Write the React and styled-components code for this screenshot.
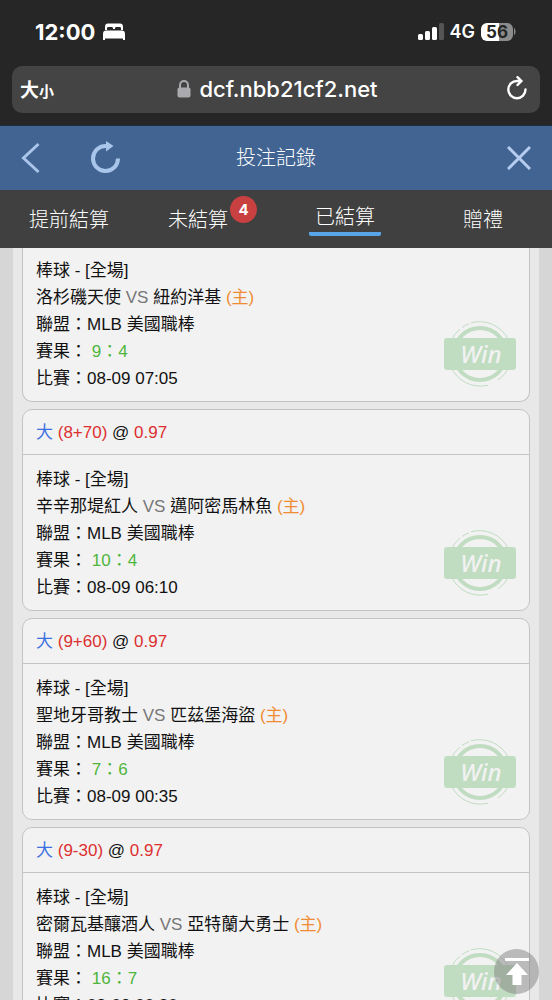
import React from 'react'
import styled, { createGlobalStyle } from 'styled-components';

const bets = [
    { id: 1, away: '洛杉磯天使', home: '紐約洋基', score: '9：4', date: '08-09 07:05' },
    { id: 2, line: '(8+70)', odds: '0.97', away: '辛辛那堤紅人', home: '邁阿密馬林魚', score: '10：4', date: '08-09 06:10' },
    { id: 3, line: '(9+60)', odds: '0.97', away: '聖地牙哥教士', home: '匹茲堡海盜', score: '7：6', date: '08-09 00:35' },
    { id: 4, line: '(9-30)', odds: '0.97', away: '密爾瓦基釀酒人', home: '亞特蘭大勇士', score: '16：7', date: '08-09 00:20' },
];

const tabs = [
    { id: 'early', label: '提前結算' },
    { id: 'open', label: '未結算', count: 4 },
    { id: 'settled', label: '已結算' },
    { id: 'gift', label: '贈禮' },
];

export default function App() {
    //affichage
  return (
    <>
        <GlobalStyle />
        <Screen>
            <StatusBar />
            <AddressBar />
            <TitleBar>
                <TitleActions>
                    <IconButton aria-label="返回">
                        <svg width="20" height="32" viewBox="0 0 20 32" fill="none" stroke="#a9c6ea" strokeWidth="3">
                            <path d="M17.500 2 2.500 16 17.500 30" />
                        </svg>
                    </IconButton>
                    <IconButton aria-label="重新整理">
                        <svg width="30" height="34" viewBox="0 0 30 34" fill="none">
                            <path d="M27 17.500A12.500 12.500 0 1 1 14.500 5H17" stroke="#a9c6ea" strokeWidth="4" />
                            <path d="M15 0 22.500 5 15 10.500Z" fill="#a9c6ea" />
                        </svg>
                    </IconButton>
                </TitleActions>
                <Title>投注記錄</Title>
                <TitleActions $end>
                    <IconButton aria-label="關閉">
                        <svg width="24" height="24" viewBox="0 0 24 24" fill="none" stroke="#b6cdf0" strokeWidth="3">
                            <path d="M1 1 23 23M23 1 1 23" />
                        </svg>
                    </IconButton>
                </TitleActions>
            </TitleBar>
            <TabBar>
                {tabs.map(({ id, label, count }) => (
                    <Tab key={id} $badged={Boolean(count)}>
                        <TabLabel $active={id === 'settled'}>
                            {label}
                            {count && <Badge>{count}</Badge>}
                        </TabLabel>
                    </Tab>
                ))}
            </TabBar>
            <Content>
                <BetList>
                    {bets.map((bet) => <BetCard key={bet.id} {...bet} />)}
                </BetList>
            </Content>
            <TopButton aria-label="回到頂部">
                <svg width="24" height="28" viewBox="0 0 24 28" fill="#fff">
                    <path d="M0 0h24v3H0zM12 5 23 17h-6.500v10h-9V17H1z" />
                </svg>
            </TopButton>
        </Screen>
    </>
  )
}

function StatusBar() {
  return (
    <StatusRow>
        <Clock>
            12:00
            <svg width="24" height="18" viewBox="0 0 24 18" fill="#fff">
                <path d="M3 7V4C3 1.500 4 .5 6 .5h12c2 0 3 1 3 3.500V7h-2V5.500C19 4.500 18.500 4 17.500 4h-3c-1 0-1.500.5-1.500 1.500V6h-2V5.500C11 4.500 10.500 4 9.500 4h-3C5.500 4 5 4.500 5 5.500V7z" />
                <path d="M1 17v-6c0-2.500 1-3.500 3.500-3.500h15c2.500 0 3.500 1 3.500 3.500v6h-2v-1.500H3V17z" />
            </svg>
        </Clock>
        <Signals>
            <svg width="26" height="17" viewBox="0 0 26 17" fill="#fff">
                <rect x="0" y="11" width="5" height="6" rx="1.500" />
                <rect x="7" y="8" width="5" height="9" rx="1.500" />
                <rect x="14" y="4" width="5" height="13" rx="1.500" />
                <rect x="21" y="0" width="5" height="17" rx="1.500" fill="#555" />
            </svg>
            <Network>4G</Network>
            <Battery>
                <Level>56</Level>
                <svg width="2" height="7" viewBox="0 0 2 7" fill="#8c8c8c">
                    <path d="M0 0c2 1 2 6 0 7z" />
                </svg>
            </Battery>
        </Signals>
    </StatusRow>
  )
}

function AddressBar() {
  return (
    <AddressWrap>
        <Address>
            <TextSize aria-label="文字大小">大<small>小</small></TextSize>
            <Domain>
                <svg width="14" height="18" viewBox="0 0 14 18">
                    <path d="M3 9V5a4 4 0 0 1 8 0v4" fill="none" stroke="#aaaaae" strokeWidth="2" />
                    <rect x="0.500" y="7.500" width="13" height="10" rx="2" fill="#aaaaae" />
                </svg>
                dcf.nbb21cf2.net
            </Domain>
            <Reload aria-label="重新載入">
                <svg width="20" height="26" viewBox="0 0 20 26" fill="none" stroke="#fff" strokeWidth="2.400" strokeLinecap="round" strokeLinejoin="round">
                    <path d="M18.500 13.500A8.600 8.600 0 1 1 10 5H14.500M10.500 1.200 14.500 5l-4 4" />
                </svg>
            </Reload>
        </Address>
    </AddressWrap>
  )
}

function BetCard({ line, odds, away, home, score, date }) {
  return (
    <Card $cut={!line}>
        {line && (
            <CardHead>
                <Pick>大</Pick> <Odds>{line}</Odds> @ <Odds>{odds}</Odds>
            </CardHead>
        )}
        <CardBody $cut={!line}>
            <Details>
                <p>棒球 - [全場]</p>
                <p>{away} <Versus>VS</Versus> {home} <HomeMark>(主)</HomeMark></p>
                <p>聯盟：MLB 美國職棒</p>
                <p>賽果： <Score>{score}</Score></p>
                <p>比賽：{date}</p>
            </Details>
            <WinStamp />
        </CardBody>
    </Card>
  )
}

function WinStamp() {
  return (
    <Stamp width="72" height="66" viewBox="0 0 72 66" fill="none">
        <circle cx="36" cy="33" r="26" stroke="#c0dcc1" strokeWidth="4" />
        <path d="M27 1.800A32 32 0 0 1 64 18M18 6.500A32 32 0 0 1 25 2.800M7 20A32 32 0 0 1 16 8" stroke="#c0dcc1" />
        <path d="M7 46A32 32 0 0 0 44 64.200M54 59A32 32 0 0 0 65 46" stroke="#c0dcc1" />
        <rect y="17" width="72" height="32" rx="3" fill="#c0dcc1" />
        <StampText x="37" y="42" textAnchor="middle">Win</StampText>
    </Stamp>
  )
}

const latin = '"Liberation Sans", "Noto Sans CJK TC", sans-serif';
const system = 'Inter, "Noto Sans CJK TC", sans-serif';

const GlobalStyle = createGlobalStyle`
  * {
    box-sizing: border-box;
  }

  body {
    margin: 0;
    background: #d6d6d6;
    font-family: ${latin};
  }

  button {
    padding: 0;
    border: 0;
    background: none;
    color: inherit;
    font: inherit;
    cursor: pointer;
  }

  p, h1 {
    margin: 0;
  }

  svg {
    display: block;
    flex: none;
  }
`;

const Screen = styled.div`
  display: flex;
  flex-direction: column;
  height: 100vh;
  overflow: hidden;
`;

const StatusRow = styled.div`
  display: flex;
  flex: none;
  align-items: center;
  justify-content: space-between;
  height: 66px;
  padding: 0 36px 3px 35px;
  background: #262626;
  color: #fff;
  font-family: ${system};
`;

const Clock = styled.div`
  display: flex;
  align-items: center;
  gap: 7px;
  font-size: 22px;
  font-weight: 700;
`;

const Signals = styled.div`
  display: flex;
  align-items: center;
  gap: 6px;
`;

const Network = styled.span`
  font-size: 18px;
  font-weight: 600;
`;

const Battery = styled.div`
  display: flex;
  align-items: center;
  gap: 1px;
`;

const Level = styled.span`
  width: 32px;
  border-radius: 6px;
  background: linear-gradient(90deg, #fff 56%, #8c8c8c 56%);
  color: #262626;
  font-size: 17px;
  font-weight: 700;
  line-height: 18px;
  text-align: center;
`;

const AddressWrap = styled.div`
  flex: none;
  padding: 0 12px 12px;
  border-bottom: 1px solid #1f2c40;
  background: #262626;
`;

const Address = styled.div`
  display: grid;
  grid-template-columns: 1fr auto 1fr;
  align-items: center;
  height: 47px;
  padding: 0 13px 2px 8px;
  border-radius: 10px;
  background: #444;
  color: #fff;
  font-family: ${system};
`;

const TextSize = styled.button`
  justify-self: start;
  font-size: 19px;
  font-weight: 700;

  small {
    font-size: 15px;
  }
`;

const Domain = styled.div`
  display: flex;
  align-items: center;
  gap: 8px;
  padding-left: 8px;
  font-size: 22px;
  font-weight: 500;
`;

const Reload = styled.button`
  justify-self: end;
`;

const TitleBar = styled.header`
  display: grid;
  flex: none;
  grid-template-columns: 1fr auto 1fr;
  align-items: center;
  height: 64px;
  padding: 0 21px;
  background: #416493;
  color: #fff;
`;

const TitleActions = styled.div`
  display: flex;
  align-items: center;
  justify-content: ${({ $end }) => ($end ? 'flex-end' : 'flex-start')};
  gap: 50px;
`;

const IconButton = styled.button`
  display: block;
`;

const Title = styled.h1`
  padding-bottom: 4px;
  font-size: 20px;
  font-weight: 300;
`;

const TabBar = styled.nav`
  display: grid;
  flex: none;
  grid-template-columns: repeat(4, 1fr);
  height: 58px;
  padding-top: 2px;
  background: #404040;
  color: #fff;
`;

const Tab = styled.button`
  display: flex;
  align-items: center;
  justify-content: center;
  padding-right: ${({ $badged }) => ($badged ? '18px' : '0')};
`;

const TabLabel = styled.span`
  position: relative;
  padding: 0 6px ${({ $active }) => ($active ? '2px' : '0')};
  border-bottom: ${({ $active }) => ($active ? '4px solid #58a6e8' : '0')};
  border-radius: 2px;
  font-size: 20px;
  font-weight: 300;
  line-height: 26px;
`;

const Badge = styled.span`
  position: absolute;
  top: -11px;
  left: calc(100% - 4px);
  width: 27px;
  border-radius: 50%;
  background: #c8403f;
  font-family: ${system};
  font-size: 15px;
  font-weight: 700;
  line-height: 27px;
  text-align: center;
`;

const Content = styled.main`
  flex: 1;
  min-height: 0;
  padding: 0 13px;
  overflow: hidden;
`;

const BetList = styled.div`
  display: flex;
  flex-direction: column;
  gap: 7px;
  padding: 0 9px 7px;
  background: #e8e8e8;
`;

const Card = styled.article`
  border: 1px solid #c4c4c4;
  border-top-width: ${({ $cut }) => ($cut ? '0' : '1px')};
  border-radius: ${({ $cut }) => ($cut ? '0 0 10px 10px' : '10px')};
  background: #f2f2f2;
  color: #111;
  font-size: 17px;
`;

const CardHead = styled.div`
  padding: 2px 13px 0;
  border-bottom: 1px solid #c4c4c4;
  line-height: 42px;
`;

const CardBody = styled.div`
  display: flex;
  align-items: flex-end;
  justify-content: space-between;
  padding: ${({ $cut }) => ($cut ? '9px' : '11px')} 13px 9px;
`;

const Details = styled.div`
  line-height: 27px;
`;

const Pick = styled.span`
  color: #3c6fe0;
`;

const Odds = styled.span`
  color: #dc3030;
`;

const Versus = styled.span`
  color: #777;
`;

const HomeMark = styled.span`
  color: #f08c32;
`;

const Score = styled.span`
  color: #4fb53c;
`;

const Stamp = styled.svg`
  margin-bottom: 5px;
`;

const StampText = styled.text`
  fill: #f2f2f2;
  font-family: "Noto Sans", "Open Sans", sans-serif;
  font-size: 24px;
  font-style: italic;
  font-weight: 500;
`;

const TopButton = styled.button`
  position: fixed;
  right: 13px;
  bottom: 6px;
  display: flex;
  align-items: center;
  justify-content: center;
  width: 45px;
  height: 45px;
  border-radius: 50%;
  background: rgba(130, 130, 130, 0.5);
`;
